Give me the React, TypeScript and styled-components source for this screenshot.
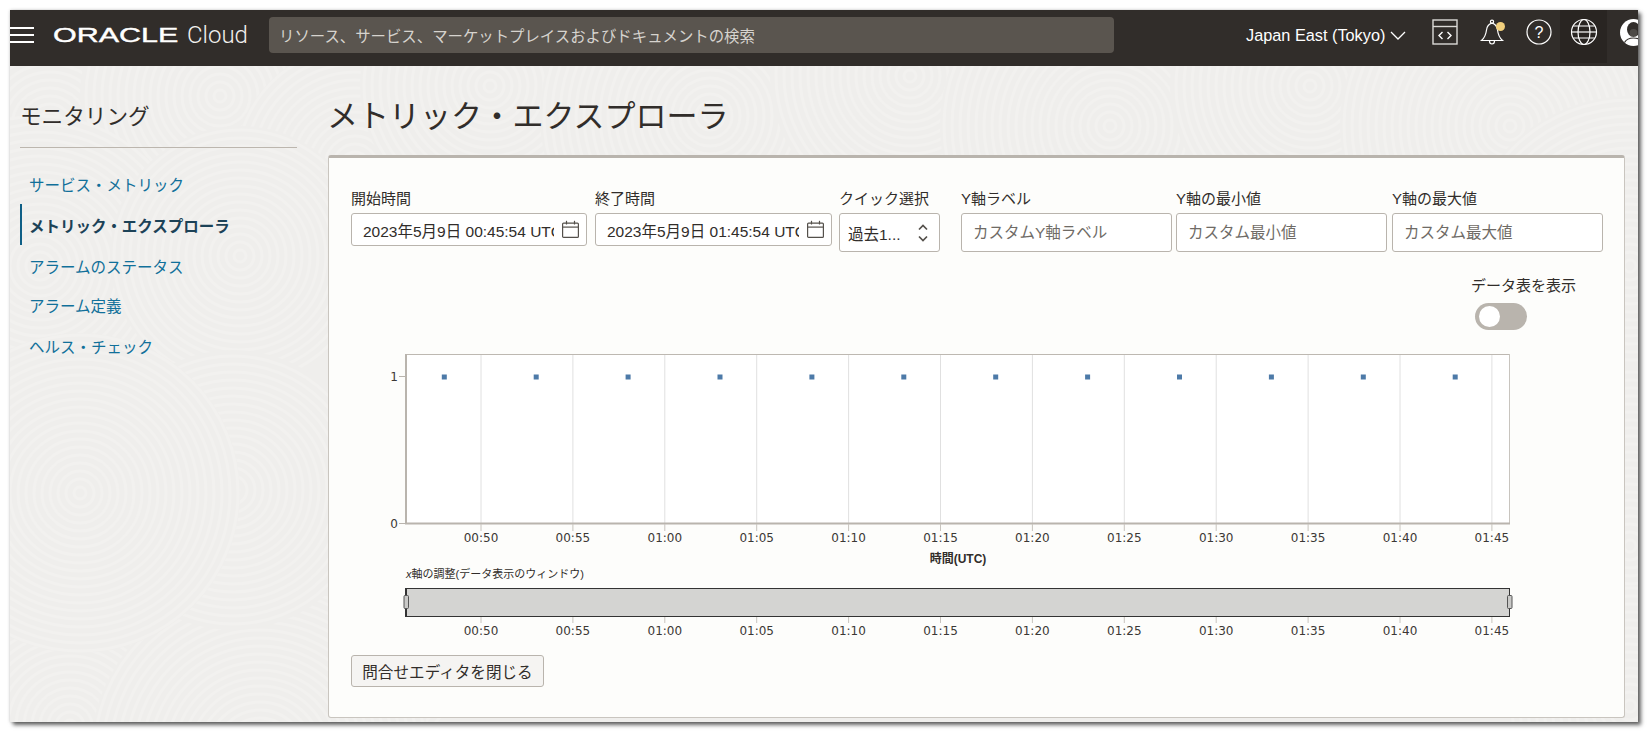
import React from "react";
import styled, { createGlobalStyle } from "styled-components";

const CJK = `"Liberation Sans", "Noto Sans CJK JP", sans-serif`;

/* Faint fingerprint swirls of the page background: [cx, cy, radius] in body coordinates. */
const SWIRLS = [
  [40, 60, 150], [210, 30, 140], [345, 100, 120], [480, 20, 130], [700, 50, 170], [900, 10, 140],
  [1100, 60, 170], [1300, 20, 140], [1500, 60, 170], [1620, 200, 170], [1620, 480, 180], [1620, 640, 120],
  [60, 660, 170], [310, 561, 150], [250, 690, 170], [30, 200, 150], [230, 190, 130], [223, 424, 140], [70, 427, 160],
];

const swirlSvg = () => {
  const parts = SWIRLS.map(([cx, cy, r]) => {
    let rings = `<circle cx='${cx}' cy='${cy}' r='${r}' fill='#efeeec'/>`;
    for (let q = 6; q <= r; q += 8) {
      rings += `<circle cx='${cx}' cy='${cy}' r='${q}' fill='none' stroke='#f2f1ef' stroke-width='3'/>`;
    }
    return rings;
  }).join("");
  const svg = `<svg xmlns='http://www.w3.org/2000/svg' width='1628' height='656'>${parts}</svg>`;
  return `url("data:image/svg+xml,${encodeURIComponent(svg)}")`;
};

const Global = createGlobalStyle`
  html, body { margin: 0; padding: 0; background: #fff; height: 100%; overflow: hidden; }
  * { box-sizing: border-box; }
  body { font-family: ${CJK}; color: #312d2a; }
`;

const Page = styled.div`
  width: 1649px;
  height: 733px;
  padding: 10px 11px 11px 10px;
`;

const Window = styled.div`
  width: 1628px;
  height: 712px;
  display: flex;
  flex-direction: column;
  overflow: hidden;
  box-shadow: 0 0 3px rgba(0, 0, 0, 0.2), 3px 3px 4px rgba(0, 0, 0, 0.6);
  background-color: #efeeec;
`;

const Header = styled.header`
  height: 56px;
  flex: none;
  display: flex;
  align-items: center;
  padding-bottom: 6px;
  background: #312d2a;
  color: #fff;
`;

const Burger = styled.div`
  width: 24px;
  height: 16px;
  flex: none;
  margin-right: 19px;
  border-top: 2px solid #fff;
  border-bottom: 2px solid #fff;
  display: flex;
  align-items: center;
  &::before { content: ""; display: block; width: 100%; height: 2px; background: #fff; }
`;

const Brand = styled.div`
  width: 216px;
  flex: none;
  display: flex;
  align-items: center;
`;

const OracleWord = styled.span`
  display: block;
  width: 134px;
  flex: none;
  font: 400 21px/24px "Liberation Sans", sans-serif;
  -webkit-text-stroke: 0.4px #fff;
  transform: scaleX(1.45);
  transform-origin: left center;
`;

const CloudWord = styled.span`
  font: 300 24px/24px Roboto, sans-serif;
  color: #f2f0ee;
`;

const Search = styled.div`
  width: 845px;
  height: 36px;
  flex: none;
  display: flex;
  align-items: center;
  padding-left: 10px;
  background: #5a554f;
  border-radius: 4px;
  color: #d6d3ce;
  font-size: 15.4px;
  white-space: nowrap;
`;

const Region = styled.div`
  flex: none;
  margin-left: 132px;
  margin-right: 15px;
  display: flex;
  align-items: center;
  gap: 5px;
  font-size: 16.3px;
  white-space: nowrap;
`;

const IconSlot = styled.div<{ $active?: boolean }>`
  width: 47px;
  height: 56px;
  margin: -6px 0 -6px ${(p) => (p.$active ? "-2px" : "0")};
  padding-bottom: 6px;
  flex: none;
  display: flex;
  align-items: center;
  justify-content: center;
  background: ${(p) => (p.$active ? "#292522" : "transparent")};
`;

const Body = styled.div`
  flex: 1;
  min-height: 0;
  display: flex;
  background-color: #efeeec;
  background-image: ${swirlSvg()};
  background-repeat: no-repeat;
`;

const Sidebar = styled.nav`
  width: 318px;
  flex: none;
  padding: 36px 31px 0 10px;
`;

const NavTitle = styled.h2`
  margin: 0;
  height: 46px;
  padding-bottom: 16px;
  border-bottom: 1px solid #bcb6ae;
  font-size: 21.6px;
  font-weight: 400;
  line-height: 30px;
`;

const NavList = styled.div`
  margin-top: 15px;
  display: flex;
  flex-direction: column;
`;

const NavItem = styled.a<{ $active?: boolean }>`
  height: 41px;
  display: flex;
  align-items: center;
  padding-left: 7px;
  font-size: 15.5px;
  font-weight: ${(p) => (p.$active ? 700 : 400)};
  color: ${(p) => (p.$active ? "#1c4257" : "#11709a")};
  border-left: 2px solid ${(p) => (p.$active ? "#0f5f86" : "transparent")};
  &:nth-child(3) { margin-bottom: -2px; }
`;

const Main = styled.main`
  width: 1297px;
  flex: none;
  padding-top: 28px;
`;

const PageTitle = styled.h1`
  margin: 0 0 17px -1px;
  height: 44px;
  font-size: 31px;
  font-weight: 400;
  line-height: 46px;
  color: #312d2a;
`;

const Panel = styled.section`
  height: 563px;
  padding: 31px 21px 0 22px;
  background: #fdfdfb;
  border: 1px solid #c9c5bf;
  border-top: 3px solid #b9b4ad;
  border-radius: 3px;
`;

const FormRow = styled.div`
  display: flex;
  align-items: flex-start;
`;

const Field = styled.div<{ $w: number; $gap?: number }>`
  flex: none;
  width: ${(p) => p.$w}px;
  margin-left: ${(p) => p.$gap ?? 0}px;
`;

const FieldLabel = styled.div`
  height: 24px;
  font-size: 15px;
  line-height: 20px;
  white-space: nowrap;
`;

const Box = styled.div<{ $h: number }>`
  height: ${(p) => p.$h}px;
  display: flex;
  align-items: center;
  background: #fff;
  border: 1px solid #b9b4ad;
  border-radius: 3px;
`;

const TextInput = styled.input`
  flex: 1;
  min-width: 0;
  height: 100%;
  border: 0;
  outline: 0;
  background: transparent;
  padding: 0 0 0 11px;
  font: 400 15.5px ${CJK};
  color: #312d2a;
  &::placeholder { color: #6f6b66; opacity: 1; }
`;

const BoxIcon = styled.span`
  flex: none;
  width: 32px;
  display: flex;
  justify-content: center;
`;

const SelectText = styled.span`
  flex: 1;
  padding-left: 8px;
  font-size: 15.5px;
  white-space: nowrap;
`;

const ToggleBlock = styled.div`
  margin: 24px 0 0 1120px;
  width: 110px;
`;

const ToggleLabel = styled.div`
  height: 27px;
  font-size: 15px;
  line-height: 20px;
  white-space: nowrap;
`;

const Toggle = styled.div`
  width: 52px;
  height: 27px;
  margin-left: 4px;
  padding: 3px 0 0 4px;
  background: #b9b4ad;
  border-radius: 14px;
  &::before {
    content: "";
    display: block;
    width: 21px;
    height: 21px;
    background: #fff;
    border-radius: 50%;
  }
`;

const ChartSvg = styled.svg`
  display: block;
  width: 1252px;
  height: 300px;
  margin-top: 15px;
  overflow: visible;
`;

const CloseButton = styled.button`
  display: block;
  margin-top: 10px;
  width: 193px;
  height: 32px;
  padding: 0;
  background: #f5f4f2;
  border: 1px solid #b9b4ad;
  border-radius: 3px;
  font: 400 15.6px ${CJK};
  color: #312d2a;
`;

const TICKS = ["00:50","00:55","01:00","01:05","01:10","01:15","01:20","01:25","01:30","01:35","01:40","01:45"];
const tickX = (i: number) => 481 + i * 91.9;
const dotX = (i: number) => 444.3 + i * 91.9;

const tickFont = { fontFamily: '"DejaVu Sans", sans-serif', fontSize: 12, fill: "#3b3835" };

function Chart() {
  return (
    <ChartSvg viewBox="351 345 1252 300">
      <rect x={406} y={354} width={1103.5} height={169} fill="#fff" />
      {TICKS.map((_, i) => (
        <line key={i} x1={tickX(i)} x2={tickX(i)} y1={355} y2={523} stroke="#e0e0e0" strokeWidth={1} />
      ))}
      <line x1={406} x2={1510} y1={354.5} y2={354.5} stroke="#bdb8b1" strokeWidth={1} />
      <line x1={1509.5} x2={1509.5} y1={354} y2={523} stroke="#c8c4be" strokeWidth={1} />
      <line x1={406} x2={406} y1={354} y2={524} stroke="#b9b4ad" strokeWidth={2} />
      <line x1={405} x2={1510} y1={523.5} y2={523.5} stroke="#b9b4ad" strokeWidth={2} />
      <line x1={399} x2={405} y1={376.5} y2={376.5} stroke="#b9b4ad" />
      <line x1={399} x2={405} y1={523.5} y2={523.5} stroke="#b9b4ad" />
      <text x={394} y={381} textAnchor="middle" {...tickFont}>1</text>
      <text x={394} y={528} textAnchor="middle" {...tickFont}>0</text>
      {Array.from({ length: 12 }).map((_, i) => (
        <rect key={i} x={dotX(i) - 2.5} y={374.5} width={5} height={5} fill="#4d7aa8" />
      ))}
      {TICKS.map((t, i) => (
        <g key={t}>
          <line x1={tickX(i)} x2={tickX(i)} y1={524} y2={531} stroke="#c8c4be" />
          <text x={tickX(i)} y={542} textAnchor="middle" {...tickFont}>{t}</text>
        </g>
      ))}
      <text x={958} y={563} textAnchor="middle" fontFamily={CJK} fontSize={12} fontWeight={700} fill="#312d2a">時間(UTC)</text>
      <text x={406} y={578} fontFamily={CJK} fontSize={11} fill="#312d2a">
        <tspan fontStyle="italic">x</tspan>軸の調整(データ表示のウィンドウ)
      </text>
      <rect x={406} y={588.5} width={1103.5} height={28} fill="#d4d4d2" stroke="#333" strokeWidth={1} />
      <line x1={406} x2={406} y1={588} y2={617} stroke="#333" strokeWidth={2} />
      <rect x={404} y={595.5} width={4.5} height={13} rx={1} fill="#c9c9c7" stroke="#555" />
      <rect x={1507.5} y={595.5} width={4.5} height={13} rx={1} fill="#c9c9c7" stroke="#555" />
      {TICKS.map((t, i) => (
        <g key={t + "b"}>
          <line x1={tickX(i)} x2={tickX(i)} y1={617} y2={623} stroke="#c8c4be" />
          <text x={tickX(i)} y={635} textAnchor="middle" {...tickFont}>{t}</text>
        </g>
      ))}
    </ChartSvg>
  );
}

const Calendar = () => (
  <svg width="19" height="19" viewBox="0 0 19 19" fill="none" stroke="#54504b" strokeWidth="1.2">
    <rect x="1.6" y="3.1" width="15.8" height="14.3" rx="1" />
    <line x1="1.6" y1="7.1" x2="17.4" y2="7.1" />
    <line x1="5.5" y1="0.8" x2="5.5" y2="4.5" />
    <line x1="13.5" y1="0.8" x2="13.5" y2="4.5" />
  </svg>
);

const UpDown = () => (
  <svg width="12" height="20" viewBox="0 0 12 20" fill="none" stroke="#54504b" strokeWidth="1.7">
    <path d="M2 6.5 L6 2.5 L10 6.5" />
    <path d="M2 13.5 L6 17.5 L10 13.5" />
  </svg>
);

const Chevron = () => (
  <svg width="16" height="9" viewBox="0 0 16 9" fill="none" stroke="#fff" strokeWidth="1.3">
    <path d="M1 1 L8 8 L15 1" />
  </svg>
);

const CodeIcon = () => (
  <svg width="26" height="26" viewBox="0 0 26 26" fill="none" stroke="#dcdad7" strokeWidth="1.4">
    <rect x="1" y="1" width="24" height="24" />
    <line x1="1" y1="7.5" x2="25" y2="7.5" />
    <path d="M10.5 13 L7 16.5 L10.5 20" stroke="#fff" />
    <path d="M15.5 13 L19 16.5 L15.5 20" stroke="#fff" />
  </svg>
);

const BellIcon = () => (
  <svg width="26" height="27" viewBox="-2 0 26 27" fill="none" stroke="#fff" strokeWidth="1.2">
    <path d="M0.5 21.5 C4 18.5 5 15 5.5 11 C6 7 8 5 11 4.2 C14 5 16 7 16.5 11 C17 15 18 18.5 21.5 21.5 Z" />
    <circle cx="11" cy="2.8" r="1.6" />
    <path d="M8.5 22 C8.5 26 13.5 26 13.5 22" />
    <circle cx="19.5" cy="7.5" r="4.5" fill="#f1cf7c" stroke="none" />
  </svg>
);

const HelpIcon = () => (
  <svg width="26" height="26" viewBox="0 0 26 26">
    <circle cx="13" cy="13" r="12" fill="none" stroke="#fff" strokeWidth="1.2" />
    <text x="13" y="18.5" textAnchor="middle" fontFamily='"Liberation Sans", sans-serif' fontSize="16" fill="#fff">?</text>
  </svg>
);

const GlobeIcon = () => (
  <svg width="28" height="28" viewBox="0 0 28 28" fill="none" stroke="#fff" strokeWidth="1.2">
    <circle cx="14" cy="14" r="12.5" />
    <ellipse cx="14" cy="14" rx="6" ry="12.5" />
    <line x1="1.5" y1="14" x2="26.5" y2="14" />
    <path d="M3.2 8 H24.8 M3.2 20 H24.8" />
  </svg>
);

const AvatarIcon = () => (
  <svg width="33" height="27" viewBox="-6 0 33 27">
    <circle cx="13.5" cy="13.5" r="13.5" fill="#fff" />
    <ellipse cx="13.5" cy="10.5" rx="6.5" ry="7.5" fill="#312d2a" />
    <ellipse cx="13.5" cy="14" rx="4" ry="4" fill="#f1f0ee" opacity="0.15" />
    <path d="M4.5 23.5 C6.5 20 10 19 13.5 19 C17 19 20.5 20 22.5 23.5" fill="none" stroke="#312d2a" strokeWidth="1.2" />
  </svg>
);

export default function App() {
  return (
    <>
      <Global />
      <Page>
        <Window>
          <Header>
            <Burger />
            <Brand>
              <OracleWord>ORACLE</OracleWord>
              <CloudWord>Cloud</CloudWord>
            </Brand>
            <Search>リソース、サービス、マーケットプレイスおよびドキュメントの検索</Search>
            <Region>
              Japan East (Tokyo)
              <Chevron />
            </Region>
            <IconSlot><CodeIcon /></IconSlot>
            <IconSlot><BellIcon /></IconSlot>
            <IconSlot><HelpIcon /></IconSlot>
            <IconSlot $active><GlobeIcon /></IconSlot>
            <IconSlot><AvatarIcon /></IconSlot>
          </Header>
          <Body>
            <Sidebar>
              <NavTitle>モニタリング</NavTitle>
              <NavList>
                <NavItem>サービス・メトリック</NavItem>
                <NavItem $active>メトリック・エクスプローラ</NavItem>
                <NavItem>アラームのステータス</NavItem>
                <NavItem>アラーム定義</NavItem>
                <NavItem>ヘルス・チェック</NavItem>
              </NavList>
            </Sidebar>
            <Main>
              <PageTitle>メトリック・エクスプローラ</PageTitle>
              <Panel>
                <FormRow>
                  <Field $w={236}>
                    <FieldLabel>開始時間</FieldLabel>
                    <Box $h={33}>
                      <TextInput readOnly value="2023年5月9日 00:45:54 UTC" />
                      <BoxIcon><Calendar /></BoxIcon>
                    </Box>
                  </Field>
                  <Field $w={237} $gap={8}>
                    <FieldLabel>終了時間</FieldLabel>
                    <Box $h={33}>
                      <TextInput readOnly value="2023年5月9日 01:45:54 UTC" />
                      <BoxIcon><Calendar /></BoxIcon>
                    </Box>
                  </Field>
                  <Field $w={101} $gap={7}>
                    <FieldLabel>クイック選択</FieldLabel>
                    <Box $h={39}>
                      <SelectText>過去1...</SelectText>
                      <BoxIcon><UpDown /></BoxIcon>
                    </Box>
                  </Field>
                  <Field $w={211} $gap={21}>
                    <FieldLabel>Y軸ラベル</FieldLabel>
                    <Box $h={39}><TextInput readOnly placeholder="カスタムY軸ラベル" /></Box>
                  </Field>
                  <Field $w={211} $gap={4}>
                    <FieldLabel>Y軸の最小値</FieldLabel>
                    <Box $h={39}><TextInput readOnly placeholder="カスタム最小値" /></Box>
                  </Field>
                  <Field $w={211} $gap={5}>
                    <FieldLabel>Y軸の最大値</FieldLabel>
                    <Box $h={39}><TextInput readOnly placeholder="カスタム最大値" /></Box>
                  </Field>
                </FormRow>
                <ToggleBlock>
                  <ToggleLabel>データ表を表示</ToggleLabel>
                  <Toggle />
                </ToggleBlock>
                <Chart />
                <CloseButton>問合せエディタを閉じる</CloseButton>
              </Panel>
            </Main>
          </Body>
        </Window>
      </Page>
    </>
  );
}
